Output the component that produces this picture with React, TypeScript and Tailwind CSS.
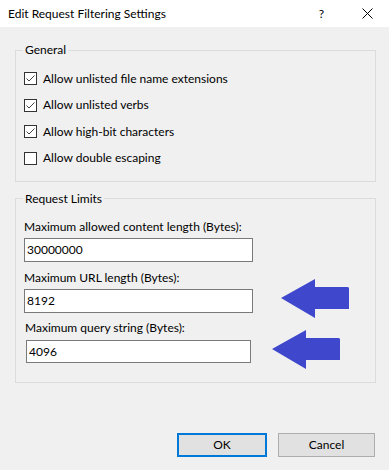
const CheckRow = ({ label, checked }: { label: string; checked: boolean }) => (
  <div className="flex items-center h-[13px]">
    <div className="w-[13px] h-[13px] bg-white border border-[#333333] flex items-center justify-center">
      {checked && (
        <svg width="11" height="11" viewBox="0 0 11 11">
          <path d="M1.5 5.5 L4 8 L9.5 2.5" fill="none" stroke="#444444" strokeWidth="1" />
        </svg>
      )}
    </div>
    <span className="ml-[6px] leading-[16px]">{label}</span>
  </div>
);

const Arrow = ({ className }: { className: string }) => (
  <svg className={className} width="68" height="39" viewBox="0 0 68 39">
    <polygon points="0,19 34,0 34,8 67,8 68,9 68,30 34,30 34,39" fill="#3f48cc" />
  </svg>
);

export default function App() {
  const checks = [
    { label: "Allow unlisted file name extensions", checked: true },
    { label: "Allow unlisted verbs", checked: true },
    { label: "Allow high-bit characters", checked: true },
    { label: "Allow double escaping", checked: false },
  ];

  return (
    <div className="relative w-[389px] h-[470px] bg-[#f0f0f0] text-[12px] text-black font-['Lato',sans-serif] overflow-hidden">
      {/* title bar */}
      <div className="h-[27px] bg-white flex items-center pl-[8px]">
        <span className="flex-1">Edit Request Filtering Settings</span>
        <span className="mr-[38px]">?</span>
        <svg className="mr-[16px]" width="11" height="11" viewBox="0 0 11 11">
          <path d="M0.5 0.5 L10.5 10.5 M10.5 0.5 L0.5 10.5" stroke="#000" strokeWidth="1" />
        </svg>
      </div>

      {/* General */}
      <fieldset className="ml-[15px] mt-[15px] w-[361px] border border-[#dcdcdc] pl-[8px] pt-[14px] pb-[16px]">
        <legend className="ml-[-1px] px-[2px] leading-[16px]">General</legend>
        <div className="flex flex-col gap-[13.5px]">
          {checks.map((c, key) => (
            <CheckRow key={key} label={c.label} checked={c.checked} />
          ))}
        </div>
      </fieldset>

      {/* Request Limits */}
      <fieldset className="ml-[15px] mt-[9px] w-[361px] border border-[#dcdcdc] pl-[8px] pt-[12px] pb-[19px]">
        <legend className="ml-[-1px] px-[2px] leading-[16px]">Request Limits</legend>
        <div className="leading-[16px]">Maximum allowed content length (Bytes):</div>
        <input
          readOnly
          value="30000000"
          className="mt-[3px] block w-[229px] h-[24px] bg-white border border-[#7a7a7a] pl-[2px] outline-none"
        />
        <div className="mt-[8px] leading-[16px]">Maximum URL length (Bytes):</div>
        <input
          readOnly
          value="8192"
          className="mt-[3px] block w-[229px] h-[24px] bg-white border border-[#7a7a7a] pl-[2px] outline-none"
        />
        <div className="mt-[7px] ml-[1px] leading-[16px]">Maximum query string (Bytes):</div>
        <input
          readOnly
          value="4096"
          className="mt-[4px] ml-[2px] block w-[225px] h-[23px] bg-white border border-[#7a7a7a] pl-[2px] outline-none"
        />
      </fieldset>

      {/* buttons */}
      <div className="mt-[50px] flex justify-end gap-[11px] pr-[14px]">
        <button className="w-[90px] h-[24px] bg-[#e1e1e1] border-2 border-[#0078d7]">OK</button>
        <button className="w-[97px] h-[24px] bg-[#e1e1e1] border border-[#adadad]">Cancel</button>
      </div>

      {/* annotation arrows */}
      <Arrow className="absolute left-[281px] top-[279px]" />
      <Arrow className="absolute left-[272px] top-[330px]" />
    </div>
  );
}
